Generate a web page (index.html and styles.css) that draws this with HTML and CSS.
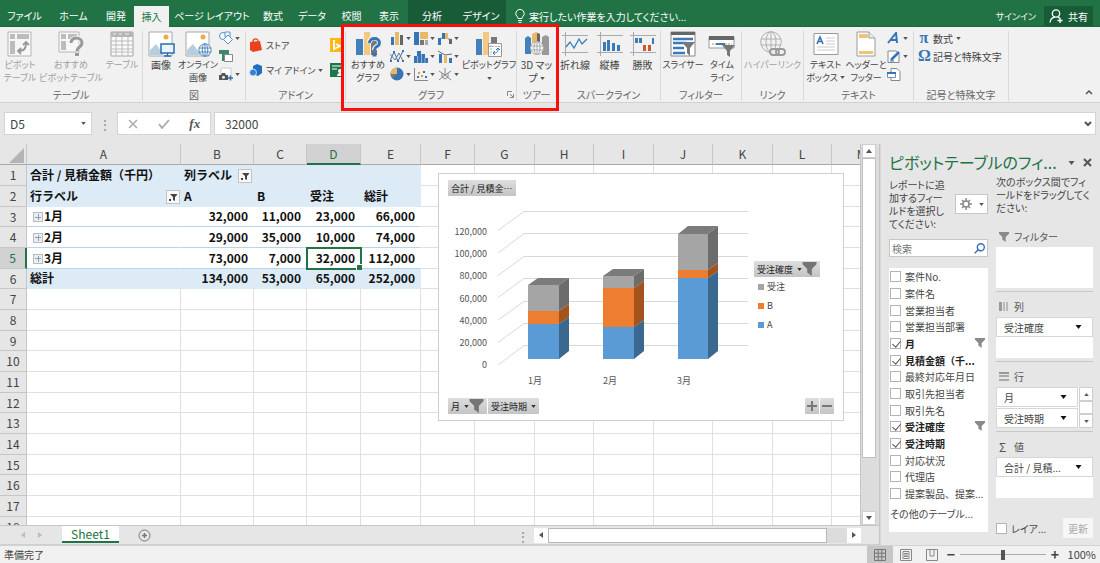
FILE: index.html
```html
<!DOCTYPE html>
<html lang="ja">
<head>
<meta charset="utf-8">
<title>Excel - ピボットグラフ</title>
<link rel="stylesheet" href="styles.css">
</head>
<body>
<svg class="defs" aria-hidden="true">
  <symbol id="caret" viewBox="0 0 6 4"><path d="M0 0h6L3 4z" fill="currentColor"/></symbol>
  <symbol id="funnel" viewBox="0 0 12 12"><path d="M0 0h12v2L8 6v6L4 9V6L0 2z" fill="currentColor"/></symbol>
</svg>

<header class="titlebar">
  <nav class="tabs">
    <button class="tab">ファイル</button><button class="tab">ホーム</button><button class="tab">開発</button><button class="tab tab-active">挿入</button><button class="tab">ページ レイアウト</button><button class="tab">数式</button><button class="tab">データ</button><button class="tab">校閲</button><button class="tab">表示</button><button class="tab tab-context">分析</button><button class="tab tab-context">デザイン</button>
  </nav>
  <button class="tell-me">
    <svg width="10" height="14" viewBox="0 0 10 14" fill="none" stroke="#fff"><path d="M3 9.500C3 7.500.8 7 .8 4.600a4.200 4.200 0 0 1 8.400 0C9.200 7 7 7.500 7 9.500zM3 11.500h4M3.500 13.300h3"/></svg>
    <span>実行したい作業を入力してください...</span>
  </button>
  <button class="signin">サインイン</button>
  <button class="share">
    <svg width="15" height="14" viewBox="0 0 15 14" fill="none" stroke="#fff" stroke-width="1.300"><circle cx="7" cy="4.500" r="3.700"/><path d="M1 13.500C1.500 10 3.500 8.500 6 8.200M9 8.200l2 1M11 9v5M8.500 11.500h5"/></svg>
    <span>共有</span>
  </button>
</header>

<section class="ribbon">
  <div class="group">
    <div class="tools tools-table">
      <button class="big off kana"><svg width="26" height="26" viewBox="0 0 26 26"><path d="M1 1h23v24H1z" fill="#f7f7f7" stroke="#b5b5b5"/><path d="M3 3h5v5H3zM10 3h12v5H10zM3 10h5v13H3z" fill="#bcbcbc"/><path d="M11 20c6 0 8-2 8-8M16 14l3-3 3 3M14 17l-3 3 3 3" fill="none" stroke="#999" stroke-width="1.800"/></svg><span>ピボット<br>テーブル</span></button>
      <button class="big off kana"><svg width="26" height="26" viewBox="0 0 26 26"><path d="M1 1h20v20H1z" fill="#f7f7f7" stroke="#b5b5b5"/><path d="M3 3h5v5H3zM10 3h9v5h-9zM3 10h5v9H3z" fill="#bcbcbc"/><path d="M13 12c0-7 11-6 11 0 0 4-5 4-5 8" fill="none" stroke="#f1f1f1" stroke-width="5"/><path d="M13 12c0-7 11-6 11 0 0 4-5 4-5 8" fill="none" stroke="#999" stroke-width="3"/><path d="M17 22h4v3h-4z" fill="#999"/></svg><span>おすすめ<br>ピボットテーブル</span></button>
      <button class="big off kana"><svg width="24" height="26" viewBox="0 0 24 26"><path d="M1 1h22v24H1z" fill="#fafafa" stroke="#a5a5a5"/><path d="M1 1h22v5H1z" fill="#b5b5b5"/><path d="M1 10h22M1 14h22M1 18h22M1 21h22M6 6v19M12 6v19M18 6v19" stroke="#bcbcbc"/><path d="M3 3h3M9 3h3M15 3h4" stroke="#eee"/></svg><span>テーブル</span></button>
    </div>
    <h2>テーブル</h2>
  </div>

  <div class="group">
    <div class="tools tools-figure">
      <button class="big"><svg width="28" height="26" viewBox="0 0 28 26"><path d="M2 1h23v24H2z" fill="#fff" stroke="#a8a8a8"/><circle cx="19" cy="6" r="2.500" fill="#f0a848"/><path d="M3 24V19l6-6 8 11z" fill="#b7cee0"/><path d="M14 13h13v9H14z" fill="#eaf4fc" stroke="#2b6cb0" stroke-width="1.500"/><path d="M17 25h7M20.500 22v3" stroke="#2b6cb0" stroke-width="1.500"/></svg><span>画像</span></button>
      <button class="big kana"><svg width="28" height="26" viewBox="0 0 28 26"><path d="M2 1h23v24H2z" fill="#fff" stroke="#a8a8a8"/><circle cx="19" cy="6" r="2.500" fill="#f0a848"/><path d="M3 24V19l6-6 8 11z" fill="#b7cee0"/><g fill="#fff" stroke="#4f86bd"><circle cx="21" cy="19" r="6.200"/><ellipse cx="21" cy="19" rx="2.800" ry="6.200"/><path d="M15 17h12M15 21h12M21 13v12" fill="none"/></g></svg><span>オンライン<br>画像</span></button>
      <div class="smalls">
        <button class="small"><svg width="14" height="14" viewBox="0 0 14 14" fill="#f4f9fd" stroke="#5b93c8"><circle cx="4" cy="5" r="3.500"/><path d="M6 1h5v5H6z"/><path d="M9 4l4.500 4.500L9 13 4.500 8.500z"/></svg><svg class="caret"><use href="#caret"/></svg></button>
        <button class="small"><svg width="14" height="12" viewBox="0 0 14 12"><path d="M0 0h10v4h3v3H6v4H3V4H0z" fill="#3d8768"/><path d="M5.500 4.500h8v7h-8z" fill="#fff" stroke="#888"/></svg></button>
        <button class="small"><svg width="14" height="14" viewBox="0 0 14 14"><path d="M2 1h10v9H2z" fill="#fff" stroke="#ccc"/><path d="M0 8h2l1-2h3l1 2h2v5H0z" fill="#555"/><circle cx="4.500" cy="10.300" r="1.500" fill="#eee"/><path d="M9 11h5M11.500 8.500v5" stroke="#2e75b6" stroke-width="1.500"/></svg><svg class="caret"><use href="#caret"/></svg></button>
      </div>
    </div>
    <h2>図</h2>
  </div>

  <div class="group">
    <div class="tools tools-addin">
      <button class="line kana"><svg width="14" height="14" viewBox="0 0 14 14"><path d="M1 4l10-1 2 9-9 2-3-2z" fill="#e8431c"/><path d="M4 4c0-4 5-4 5-1" fill="none" stroke="#e8431c" stroke-width="1.300"/></svg><span>ストア</span></button>
      <button class="small" aria-label="Bing Maps"><svg width="14" height="14" viewBox="0 0 14 14"><path d="M0 0h14v14H0z" fill="#fcb714"/><path d="M4 2v9l6-3-4-2" fill="none" stroke="#fff" stroke-width="1.800"/></svg></button>
      <button class="line kana"><svg width="14" height="14" viewBox="0 0 14 14"><path d="M4 3l4-2 5 2v7l-4 3-5-2z" fill="#1f6fc0"/><circle cx="4" cy="9.500" r="3.500" fill="#2f86d8" stroke="#f1f1f1" stroke-width=".8"/></svg><span>マイ アドイン</span><svg class="caret"><use href="#caret"/></svg></button>
      <button class="small" aria-label="People Graph"><svg width="14" height="14" viewBox="0 0 14 14"><path d="M0 0h14v14H0z" fill="#1c7a4a"/><path d="M2 3h10M2 6h5" stroke="#fff"/><circle cx="10" cy="8" r="2" fill="#fff"/><path d="M7 13c0-4 6-4 6 0z" fill="#fff"/></svg></button>
    </div>
    <h2>アドイン</h2>
  </div>

  <div class="group">
    <div class="tools tools-graph">
      <button class="big kana"><svg width="28" height="26" viewBox="0 0 28 26"><path d="M2 8h7v16H2z" fill="#4180bb"/><path d="M10 1h6v23h-6z" fill="#f3c982"/><path d="M17 5h6v19h-6z" fill="#777"/><path d="M15.500 12c0-7 10-6 10 0 0 4-5 3-5 7" fill="none" stroke="#f1f1f1" stroke-width="5"/><path d="M15.500 12c0-6 10-6 10 0 0 4-5 3-5 7" fill="none" stroke="#3574b5" stroke-width="3"/><path d="M18.500 21.500h4v4h-4z" fill="#3574b5"/></svg><span>おすすめ<br>グラフ</span></button>
      <div class="chart-types">
        <button class="small"><svg width="14" height="13" viewBox="0 0 14 13"><path d="M1 5h3v8H1z" fill="#3574b5"/><path d="M5 0h4v13H5z" fill="#eab967"/><path d="M10 3h3v10h-3z" fill="#666"/></svg><svg class="caret"><use href="#caret"/></svg></button>
        <button class="small"><svg width="14" height="13" viewBox="0 0 14 13"><path d="M0 0h5v13H0z" fill="#3574b5"/><path d="M6 0h8v7H6z" fill="#eab967"/><path d="M6 8h4v5H6z" fill="#777"/><path d="M11 8h3v5h-3z" fill="#aaa"/></svg><svg class="caret"><use href="#caret"/></svg></button>
        <button class="small"><svg width="14" height="13" viewBox="0 0 14 13"><path d="M0 6h3v7H0zM4 1h3v6H4z" fill="#3574b5"/><path d="M7 1h3v6H7z" fill="#eab967"/><path d="M11 7h3v5h-3z" fill="#666"/><path d="M3 6h3M10 7h2" stroke="#777"/></svg><svg class="caret"><use href="#caret"/></svg></button>
        <button class="small"><svg width="14" height="13" viewBox="0 0 14 13" fill="none"><path d="M0 11L4 2l4 9 5-10" stroke="#3574b5"/><path d="M0 4l5 6 4-7 4 8" stroke="#777"/><path d="M0 10h2v2H0zM3 1h2v2H3zM7 10h2v2H7zM12 0h2v2h-2zM12 10h2v2h-2z" fill="#3574b5"/></svg><svg class="caret"><use href="#caret"/></svg></button>
        <button class="small"><svg width="14" height="13" viewBox="0 0 14 13" fill="#3574b5"><path d="M0 6h4v7H0zM3 1h4v12H3zM7 4h4v9H7zM11 8h3v5h-3z"/><path d="M3.500 6v7M7.500 4v9M11 8v5" stroke="#f1f1f1" stroke-width=".5"/></svg><svg class="caret"><use href="#caret"/></svg></button>
        <button class="small"><svg width="14" height="13" viewBox="0 0 14 13"><path d="M1 4h3v9H1z" fill="#3574b5"/><path d="M6 6h3v7H6z" fill="#eab967"/><path d="M11 8h3v5h-3z" fill="#3574b5"/><path d="M0 1l7 4 7-1" fill="none" stroke="#666"/></svg><svg class="caret"><use href="#caret"/></svg></button>
        <button class="small"><svg width="14" height="14" viewBox="0 0 14 14"><circle cx="7" cy="7" r="6.500" fill="#3574b5"/><path d="M7 7V.500A6.500 6.500 0 0 0 .5 7z" fill="#eab967"/><path d="M7 7H.5a6.500 6.500 0 0 0 2 4.600z" fill="#777"/></svg><svg class="caret"><use href="#caret"/></svg></button>
        <button class="small"><svg width="14" height="13" viewBox="0 0 14 13"><path d="M.5 0v12.500H14" fill="none" stroke="#888"/><path d="M3 8h2v2H3zM9 3h2v2H9zM11 8h2v2h-2z" fill="#3574b5"/><path d="M4 4h2v2H4zM7 7h2v2H7z" fill="#e29b3e"/></svg><svg class="caret"><use href="#caret"/></svg></button>
        <button class="small"><svg width="14" height="13" viewBox="0 0 14 13" fill="none" stroke="#888"><path d="M7 0v7l6 5M7 7l-6 5M1 3l6 4 6-4M4 5v4l3 2 3-2V5"/></svg><svg class="caret"><use href="#caret"/></svg></button>
      </div>
      <button class="big kana"><svg width="28" height="26" viewBox="0 0 28 26"><path d="M1 8h6v16H1z" fill="#4180bb"/><path d="M8 1h6v23H8z" fill="#f3c982"/><path d="M16 6h6v8h-6z" fill="#777"/><path d="M13.500 12.500h13v13h-13z" fill="#fff" stroke="#999"/><path d="M16 14v10M14 15.500h11" stroke="#aaa" stroke-dasharray="2 1"/><path d="M18 22c4 0 5-1 5-4M21 19l2-2 2 2M20 20l-2 2 2 2" fill="none" stroke="#3574b5"/></svg><span>ピボットグラフ</span><svg class="caret"><use href="#caret"/></svg></button>
    </div>
    <h2>グラフ<svg class="launcher" width="7" height="7" viewBox="0 0 7 7"><path d="M.5 5V.500H5M3 3l3 3M6.500 3v3.500H3" fill="none" stroke="#888"/></svg></h2>
  </div>

  <div class="group">
    <div class="tools">
      <button class="big"><svg width="26" height="26" viewBox="0 0 26 26"><path d="M1 7l3-2 3 2v16H1z" fill="#4180bb"/><path d="M8 3l4-2 4 2v11H8z" fill="#eab967"/><path d="M13 2l3 1v9h-3z" fill="#666"/><path d="M18 6l4-2 3 2v18h-7z" fill="#999"/><g fill="#f8f8f8" stroke="#aaa"><circle cx="13" cy="17" r="6.500"/><ellipse cx="13" cy="17" rx="3" ry="6.500"/><path d="M7 15h12M7 19h12M13 11v12" fill="none"/></g></svg><span>3D マッ<br>プ <svg class="caret"><use href="#caret"/></svg></span></button>
    </div>
    <h2>ツアー</h2>
  </div>

  <div class="group">
    <div class="tools tools-spark">
      <button class="big"><svg width="26" height="24" viewBox="0 0 26 24" fill="none"><path d="M3.500 0v24M0 3.500h26M0 20.500h26" stroke="#aaa"/><path d="M4 15l4-5 4 6 5-9 3 5 5-5" stroke="#3b7ab8" stroke-width="1.300"/></svg><span>折れ線</span></button>
      <button class="big"><svg width="26" height="24" viewBox="0 0 26 24"><path d="M3.500 0v24M0 3.500h26M0 20.500h26" stroke="#aaa"/><path d="M6 10h3v9H6zM10 8h3v11h-3zM15 11h3v8h-3zM20 13h3v6h-3z" fill="#3b7ab8"/></svg><span>縦棒</span></button>
      <button class="big"><svg width="26" height="24" viewBox="0 0 26 24"><path d="M3.500 0v24M0 3.500h26M0 20.500h26" stroke="#aaa"/><path d="M5 6h3v5H5zM9 6h3v5H9zM22 6h2v6h-2z" fill="#3b7ab8"/><path d="M13 13h3v6h-3zM18 13h3v6h-3z" fill="#d0562c"/></svg><span>勝敗</span></button>
    </div>
    <h2>スパークライン</h2>
  </div>

  <div class="group">
    <div class="tools tools-filter">
      <button class="big kana"><svg width="26" height="26" viewBox="0 0 26 26"><path d="M1 1h24v24H1z" fill="#fff" stroke="#888"/><path d="M1 1h24v3H1z" fill="#666"/><path d="M3 8h20M3 12h13M3 17h11M3 22h12" stroke="#3b7ab8" stroke-width="2.500"/><path d="M12 11h13l-5 6v8l-3-3v-5z" fill="#777"/></svg><span>スライサー</span></button>
      <button class="big kana"><svg width="28" height="26" viewBox="0 0 28 26"><path d="M1 6h25v11H1z" fill="#fff" stroke="#999"/><path d="M1 5h25v4H1z" fill="#666"/><path d="M4 13h4M17 13h7" stroke="#999" stroke-dasharray="2 1"/><path d="M8 13h9" stroke="#3b7ab8" stroke-width="2"/><path d="M14 14h13l-5 6v6l-3-2v-4z" fill="#777"/></svg><span>タイム<br>ライン</span></button>
    </div>
    <h2>フィルター</h2>
  </div>

  <div class="group">
    <div class="tools">
      <button class="big off kana"><svg width="28" height="26" viewBox="0 0 28 26" fill="none" stroke="#b0b0b0"><circle cx="12" cy="11" r="10.300"/><ellipse cx="12" cy="11" rx="5" ry="10.300"/><path d="M2 8h20M2 14h20M12 1v20"/><g stroke="#f1f1f1" stroke-width="5"><path d="M12 19h4M20 21h4"/></g><rect x="11" y="18" width="9" height="6" rx="3" stroke="#999" stroke-width="1.800"/><rect x="17" y="18" width="9" height="6" rx="3" stroke="#999" stroke-width="1.800"/></svg><span>ハイパーリンク</span></button>
    </div>
    <h2>リンク</h2>
  </div>

  <div class="group">
    <div class="tools tools-text">
      <button class="big kana"><svg width="26" height="24" viewBox="0 0 26 24"><path d="M1 1.500h24v21H1z" fill="#fff" stroke="#999"/><path d="M4 12L7 5l3 7M5 9.500h4" fill="none" stroke="#3574b5" stroke-width="1.600"/><path d="M13 6h9M13 9h9M13 12h9M4 15h18M4 18h18" stroke="#ccc"/></svg><span>テキスト<br>ボックス <svg class="caret"><use href="#caret"/></svg></span></button>
      <button class="big kana"><svg width="20" height="26" viewBox="0 0 20 26"><path d="M1 1h12l6 6v18H1z" fill="#fff" stroke="#999"/><path d="M13 1v6h6" fill="#eee" stroke="#999"/><path d="M3 3h9v4H3zM3 20h14v3H3z" fill="#eec37a"/></svg><span>ヘッダーと<br>フッター</span></button>
      <div class="smalls">
        <button class="small"><svg width="14" height="12" viewBox="0 0 14 12" fill="none" stroke="#3574b5" stroke-width="2"><path d="M1 11L9 1l1 10M4 8h6"/></svg><svg class="caret"><use href="#caret"/></svg></button>
        <button class="small"><svg width="14" height="13" viewBox="0 0 14 13"><path d="M1 1h8l3 3v8.500H1z" fill="#fff" stroke="#888"/><path d="M4 10l8-8" stroke="#3574b5" stroke-width="2.500"/><path d="M3 11h4" stroke="#3574b5"/></svg><svg class="caret"><use href="#caret"/></svg></button>
        <button class="small"><svg width="14" height="13" viewBox="0 0 14 13"><path d="M4 .5h6l3 3v9H4z" fill="#fff" stroke="#888"/><path d="M.5 4.500h8v5h-8z" fill="#fff" stroke="#7a8ea5"/><path d="M0 5h9" stroke="#3574b5" stroke-width="2"/></svg></button>
      </div>
    </div>
    <h2>テキスト</h2>
  </div>

  <div class="group">
    <div class="tools tools-symbol">
      <button class="line"><b class="greek">π</b><span>数式</span><svg class="caret"><use href="#caret"/></svg></button>
      <button class="line"><b class="greek">Ω</b><span>記号と特殊文字</span></button>
    </div>
    <h2>記号と特殊文字</h2>
  </div>
  <button class="collapse" aria-label="リボンを折りたたむ"><svg width="8" height="5" viewBox="0 0 8 5"><path d="M1 4l3-3 3 3" fill="none" stroke="#555" stroke-width="1.500"/></svg></button>
  <div class="highlight"></div>
</section>

<section class="formula-bar">
  <label class="name-box"><input type="text" value="D5" aria-label="名前ボックス"><svg class="caret"><use href="#caret"/></svg></label>
  <span class="dots">⋮</span>
  <div class="formula-buttons">
    <button aria-label="キャンセル"><svg width="10" height="10" viewBox="0 0 10 10"><path d="M1 1l8 8M9 1L1 9" stroke="#aaa" stroke-width="1.500"/></svg></button>
    <button aria-label="入力"><svg width="12" height="10" viewBox="0 0 12 10"><path d="M1 5l3 4 7-8" fill="none" stroke="#aaa" stroke-width="1.800"/></svg></button>
    <button class="fx">fx</button>
  </div>
  <label class="formula"><input type="text" value="32000" aria-label="数式"><svg width="8" height="6" viewBox="0 0 8 6"><path d="M1 1l3 3 3-3" fill="none" stroke="#555" stroke-width="2"/></svg></label>
</section>

<main class="workspace">
  <div class="book">
    <div class="sheet-row">
      <div class="sheet">
        <table class="cells">
          <colgroup><col class="c-head"><col class="c-a"><col class="c-b"><col class="c-c"><col class="c-d"><col class="c-e"><col class="c-d"><col class="c-e"><col class="c-std"><col class="c-e"><col class="c-std"><col class="c-e"><col class="c-std"><col></colgroup>
          <thead><tr><th class="corner"><svg width="15" height="15" viewBox="0 0 15 15"><path d="M15 0v15H0z" fill="#b4b4b4"/></svg></th><th>A</th><th>B</th><th>C</th><th class="col-on">D</th><th>E</th><th>F</th><th>G</th><th>H</th><th>I</th><th>J</th><th>K</th><th>L</th><th>M</th></tr></thead>
          <tbody>
            <tr class="band"><th>1</th><td>合計 / 見積金額（千円）</td><td><div class="with-filter">列ラベル<button class="filter" aria-label="列フィルター"><svg width="8" height="8" viewBox="0 0 8 8"><path d="M1 1h7v1L6 4v4L4 7V4zM0 6h2v2H0z" fill="currentColor"/></svg></button></div></td><td></td><td></td><td></td><td><td><td><td><td><td><td><td></tr>
            <tr class="band"><th>2</th><td class="edge"><div class="with-filter">行ラベル<button class="filter" aria-label="行フィルター"><svg width="8" height="8" viewBox="0 0 8 8"><path d="M1 1h7v1L6 4v4L4 7V4zM0 6h2v2H0z" fill="currentColor"/></svg></button></div></td><td>A</td><td>B</td><td>受注</td><td>総計</td><td><td><td><td><td><td><td><td></tr>
            <tr class="item"><th>3</th><td><button class="plus" aria-label="展開"></button>1月</td><td class="num">32,000</td><td class="num">11,000</td><td class="num">23,000</td><td class="num">66,000</td><td><td><td><td><td><td><td><td></tr>
            <tr class="item"><th>4</th><td><button class="plus" aria-label="展開"></button>2月</td><td class="num">29,000</td><td class="num">35,000</td><td class="num">10,000</td><td class="num">74,000</td><td><td><td><td><td><td><td><td></tr>
            <tr class="item"><th class="row-on">5</th><td><button class="plus" aria-label="展開"></button>3月</td><td class="num">73,000</td><td class="num">7,000</td><td class="num selected">32,000</td><td class="num">112,000</td><td><td><td><td><td><td><td><td></tr>
            <tr class="band"><th>6</th><td>総計</td><td class="num">134,000</td><td class="num">53,000</td><td class="num">65,000</td><td class="num">252,000</td><td><td><td><td><td><td><td><td></tr>
            <tr><th>7</th><td><td><td><td><td><td><td><td><td><td><td><td><td></tr>
            <tr><th>8</th><td><td><td><td><td><td><td><td><td><td><td><td><td></tr>
            <tr><th>9</th><td><td><td><td><td><td><td><td><td><td><td><td><td></tr>
            <tr><th>10</th><td><td><td><td><td><td><td><td><td><td><td><td><td></tr>
            <tr><th>11</th><td><td><td><td><td><td><td><td><td><td><td><td><td></tr>
            <tr><th>12</th><td><td><td><td><td><td><td><td><td><td><td><td><td></tr>
            <tr><th>13</th><td><td><td><td><td><td><td><td><td><td><td><td><td></tr>
            <tr><th>14</th><td><td><td><td><td><td><td><td><td><td><td><td><td></tr>
            <tr><th>15</th><td><td><td><td><td><td><td><td><td><td><td><td><td></tr>
            <tr><th>16</th><td><td><td><td><td><td><td><td><td><td><td><td><td></tr>
            <tr><th>17</th><td><td><td><td><td><td><td><td><td><td><td><td><td></tr>
            <tr><th>18</th><td><td><td><td><td><td><td><td><td><td><td><td><td></tr>
          </tbody>
        </table>

        <figure class="chart">
          <div class="chart-row"><button class="field">合計 / 見積金…</button></div>
          <div class="chart-row chart-main">
            <svg width="306" height="198" viewBox="448 198 306 198">
              <g fill="none" stroke="#d9d9d9"><path d="M498 230.500L524 211.500H748M498 253L524 233.500H748M498 275.500L524 256.500H748M498 297.500L524 278.500H748M498 320L524 301.500H748M498 342.500L524 323.500H748M498 365L524 345.500H748"/></g>
              <g class="axis" text-anchor="end"><text x="487" y="235">120,000</text><text x="487" y="257">100,000</text><text x="487" y="279">80,000</text><text x="487" y="302">60,000</text><text x="487" y="324">40,000</text><text x="487" y="346">20,000</text><text x="487" y="368">0</text></g>
              <g class="axis" text-anchor="middle"><text x="535" y="384">1月</text><text x="610" y="384">2月</text><text x="684" y="384">3月</text></g>
              <path d="M528 285l10-7h31l-10 7z" fill="#7b7b7b"/><path d="M528 285h31v26h-31z" fill="#a5a5a5"/><path d="M559 285l10-7v26l-10 7z" fill="#6c6c6c"/>
              <path d="M528 311h31v13h-31z" fill="#ed7d31"/><path d="M559 311l10-7v13l-10 7z" fill="#a3531b"/><path d="M528 324h31v35h-31z" fill="#5b9bd5"/><path d="M559 324l10-7v34l-10 8z" fill="#3b688f"/>
              <path d="M603 276l10-7h31l-10 7z" fill="#7b7b7b"/><path d="M603 276h31v12h-31z" fill="#a5a5a5"/><path d="M634 276l10-7v12l-10 7z" fill="#6c6c6c"/>
              <path d="M603 288h31v39h-31z" fill="#ed7d31"/><path d="M634 288l10-7v39l-10 7z" fill="#a3531b"/><path d="M603 327h31v32h-31z" fill="#5b9bd5"/><path d="M634 327l10-7v31l-10 8z" fill="#3b688f"/>
              <path d="M678 234l10-8h30l-10 8z" fill="#7b7b7b"/><path d="M678 234h30v36h-30z" fill="#a5a5a5"/><path d="M708 234l10-8v37l-10 7z" fill="#6c6c6c"/>
              <path d="M678 270h30v8h-30z" fill="#ed7d31"/><path d="M708 270l10-7v8l-10 7z" fill="#a3531b"/><path d="M678 278h30v81h-30z" fill="#5b9bd5"/><path d="M708 278l10-7v80l-10 8z" fill="#3b688f"/>
            </svg>
            <div class="legend">
              <button class="field"><span>受注確度</span><svg class="caret"><use href="#caret"/></svg><svg class="big-funnel"><use href="#funnel"/></svg></button>
              <ul><li><i class="key key-won"></i>受注</li><li><i class="key key-b"></i>B</li><li><i class="key key-a"></i>A</li></ul>
            </div>
          </div>
          <div class="chart-row">
            <button class="field"><span>月</span><svg class="caret"><use href="#caret"/></svg><svg class="big-funnel"><use href="#funnel"/></svg></button>
            <button class="field"><span>受注時期</span><svg class="caret"><use href="#caret"/></svg></button>
            <span class="spacer"></span>
            <button class="field sign" aria-label="展開"><svg width="10" height="10"><path d="M0 5h10M5 0v10" stroke="#777" stroke-width="2"/></svg></button>
            <button class="field sign" aria-label="折りたたみ"><svg width="10" height="10"><path d="M0 5h10" stroke="#777" stroke-width="2"/></svg></button>
          </div>
        </figure>
      </div>
      <div class="vscroll"><button aria-label="上へ"><svg class="caret flip"><use href="#caret"/></svg></button><div class="v-thumb"></div><div class="v-track"></div><button aria-label="下へ"><svg class="caret"><use href="#caret"/></svg></button></div>
    </div>
    <div class="sheet-bar">
      <span class="tab-nav"><svg width="4" height="6" viewBox="0 0 4 6"><path d="M4 0v6L0 3z" fill="#bbb"/></svg><svg width="4" height="6" viewBox="0 0 4 6"><path d="M0 0v6l4-3z" fill="#bbb"/></svg></span>
      <button class="sheet-tab">Sheet1</button>
      <button class="add-sheet" aria-label="新しいシート"><svg width="13" height="13" viewBox="0 0 13 13" fill="none" stroke="#777"><circle cx="6.500" cy="6.500" r="5.500"/><path d="M4 6.500h5M6.500 4v5" stroke-width="1.500"/></svg></button>
      <span class="dots">⋮</span>
      <div class="hscroll"><button aria-label="左へ"><svg width="4" height="6" viewBox="0 0 4 6"><path d="M4 0v6L0 3z" fill="#555"/></svg></button><div class="h-thumb"></div><div class="h-track"></div><button aria-label="右へ"><svg width="4" height="6" viewBox="0 0 4 6"><path d="M0 0v6l4-3z" fill="#555"/></svg></button></div>
    </div>
  </div>

  <aside class="pane">
    <div class="pane-title"><h1>ピボットテーブルのフィ...</h1><svg class="caret"><use href="#caret"/></svg><button aria-label="閉じる"><svg width="9" height="9" viewBox="0 0 9 9"><path d="M1 1l7 7M8 1L1 8" stroke="#555" stroke-width="2"/></svg></button></div>
    <div class="pane-cols">
      <div class="fields-col">
        <div class="intro"><p>レポートに追加するフィールドを選択してください:</p><button class="gear" aria-label="ツール"><svg width="12" height="12" viewBox="0 0 12 12" fill="none" stroke="#888"><circle cx="6" cy="6" r="3" stroke-width="1.500"/><path d="M6 0v3M6 9v3M0 6h3M9 6h3M2 2l2 2M8 8l2 2M10 2L8 4M4 8l-2 2" stroke-width="1.500"/></svg><svg class="caret"><use href="#caret"/></svg></button></div>
        <label class="search"><input type="text" placeholder="検索" aria-label="検索"><svg width="11" height="11" viewBox="0 0 11 11" fill="none" stroke="#2f6fc0" stroke-width="1.400"><circle cx="6.800" cy="4.200" r="3.500"/><path d="M4.300 6.700L.7 10.300"/></svg></label>
        <div class="field-list">
          <ul>
            <li><label><input type="checkbox"><span>案件No.</span></label></li>
            <li><label><input type="checkbox"><span>案件名</span></label></li>
            <li><label><input type="checkbox"><span>営業担当者</span></label></li>
            <li><label><input type="checkbox"><span>営業担当部署</span></label></li>
            <li><label><input type="checkbox" checked><span>月</span><svg class="flag"><use href="#funnel"/></svg></label></li>
            <li><label><input type="checkbox" checked><span>見積金額（千...</span></label></li>
            <li><label><input type="checkbox"><span>最終対応年月日</span></label></li>
            <li><label><input type="checkbox"><span>取引先担当者</span></label></li>
            <li><label><input type="checkbox"><span>取引先名</span></label></li>
            <li><label><input type="checkbox" checked><span>受注確度</span><svg class="flag"><use href="#funnel"/></svg></label></li>
            <li><label><input type="checkbox" checked><span>受注時期</span></label></li>
            <li><label><input type="checkbox"><span>対応状況</span></label></li>
            <li><label><input type="checkbox"><span>代理店</span></label></li>
            <li><label><input type="checkbox"><span>提案製品、提案...</span></label></li>
          </ul>
          <a href="#">その他のテーブル...</a>
        </div>
      </div>
      <div class="areas-col">
        <p>次のボックス間でフィールドをドラッグしてください:</p>
        <section class="area"><h3><svg width="10" height="10"><use href="#funnel"/></svg>フィルター</h3><div class="drop"></div></section>
        <section class="area"><h3><svg width="10" height="9" viewBox="0 0 10 9"><path d="M0 0h3v9H0z" fill="#999"/><path d="M4 0h2v9H4zM7 0h2v9H7z" fill="#bbb"/></svg>列</h3><div class="drop"><button class="pill">受注確度<svg class="caret"><use href="#caret"/></svg></button></div></section>
        <section class="area"><h3><svg width="10" height="9" viewBox="0 0 10 9"><path d="M0 0h10v2H0z" fill="#999"/><path d="M0 3h10v2H0zM0 7h10v2H0z" fill="#aaa"/></svg>行</h3><div class="drop drop-split"><div class="pills"><button class="pill">月<svg class="caret"><use href="#caret"/></svg></button><button class="pill">受注時期<svg class="caret"><use href="#caret"/></svg></button></div><div class="mini-scroll"><button aria-label="上へ"><svg class="caret flip"><use href="#caret"/></svg></button><i></i><button aria-label="下へ"><svg class="caret"><use href="#caret"/></svg></button></div></div></section>
        <section class="area area-last"><h3><span class="sigma">Σ</span>値</h3><div class="drop"><button class="pill">合計 / 見積...<svg class="caret"><use href="#caret"/></svg></button></div></section>
        <div class="defer"><label><input type="checkbox"><span>レイア...</span></label><button class="update" disabled>更新</button></div>
      </div>
    </div>
  </aside>
</main>

<footer class="status">
  <span>準備完了</span>
  <span class="spacer"></span>
  <button class="view view-on" aria-label="標準"><svg width="12" height="12" viewBox="0 0 12 12" fill="none" stroke="#777"><path d="M.5.500h11v11H.5zM.5 4.200h11M.5 7.800h11M4.200.5v11M7.800.5v11"/></svg></button>
  <button class="view" aria-label="ページ レイアウト"><svg width="12" height="12" viewBox="0 0 12 12" fill="none" stroke="#888"><path d="M.5.500h11v11H.5zM3 2.500h6v7H3zM4 4.500h4M4 6h4M4 7.500h4"/></svg></button>
  <button class="view" aria-label="改ページ"><svg width="12" height="12" viewBox="0 0 12 12" fill="none" stroke="#888"><path d="M.5.500h11v11H.5zM4 0v7h4V0"/></svg></button>
  <span class="zoom-sign">−</span>
  <input class="zoom" type="range" min="10" max="190" value="100" aria-label="ズーム">
  <span class="zoom-sign">+</span>
  <span class="zoom-value">100%</span>
</footer>
</body>
</html>
```
FILE: styles.css
```css
* { box-sizing: border-box; }

body {
  margin: 0;
  height: 100vh;
  display: flex;
  flex-direction: column;
  overflow: hidden;
  background: #e6e6e6;
  color: #444;
  font: 10px/13px "Noto Sans CJK JP", sans-serif;
  font-feature-settings: "palt";
}

button, input { font: inherit; font-feature-settings: inherit; color: inherit; }
button { padding: 0; border: 0; background: none; white-space: nowrap; }
input { min-width: 0; border: 0; background: none; padding: 0; }
h1, h2, h3, p, ul, figure { margin: 0; padding: 0; font-weight: 400; }
ul { list-style: none; }
svg { flex: none; }
.defs { position: absolute; width: 0; height: 0; }
.caret { width: 5px; height: 3px; color: #555; }
.flip { transform: rotate(180deg); }
.spacer { flex: 1; }

/* title bar */
.titlebar {
  flex: none;
  display: flex;
  height: 27px;
  padding: 6px 7px 0 0;
  background: #217346;
  color: #fff;
  border-bottom: 1px solid #1c643c;
}
.tabs { display: grid; grid-template-columns: 49px 49px 36px 35px 86px 36px 42px 37px 38px 48px 50px; }
.tab { height: 20px; line-height: 20px; }
.tab-active { background: #f1f1f1; color: #217346; height: 21px; }
.tab-context { background: #185c37; margin-top: -6px; height: 26px; padding-top: 6px; }
.tell-me { display: flex; align-items: center; gap: 4px; margin: 0 auto 0 9px; }
.signin { margin-right: 8px; font-size: 9px; }
.share { display: flex; align-items: center; justify-content: center; gap: 4px; width: 49px; background: #185c37; }

/* ribbon */
.ribbon {
  position: relative;
  flex: none;
  display: grid;
  grid-template-columns: 143px 103px 100px 171px 40px 104px 81px 62px 110px 95px 1fr;
  height: 76px;
  padding: 4px 0 1px;
  background: #f1f1f1;
  border-bottom: 1px solid #d2d2d2;
}
.group { display: flex; flex-direction: column; justify-content: space-between; border-right: 1px solid #dadada; }
.group h2 { position: relative; text-align: center; font-size: 10px; line-height: 13px; color: #666; }
.launcher { position: absolute; right: 2px; top: 3px; }
.tools { display: grid; align-items: start; }
.tools-table { grid-template-columns: 40px 62px 40px; }
.tools-figure { grid-template-columns: 36px 38px 26px; }
.tools-addin { grid-template-columns: 81px 15px; row-gap: 11px; padding: 7px 0 0 3px; }
.tools-graph { grid-template-columns: 44px 72px 54px; }
.tools-spark { grid-template-columns: 36px 33px 33px; }
.tools-filter { grid-template-columns: 44px 34px; }
.tools-text { grid-template-columns: 43px 38px 26px; }
.tools-symbol { row-gap: 4px; padding-left: 4px; }
.big { display: flex; flex-direction: column; align-items: center; gap: 1px; }
.big > svg:first-child { height: 26px; }
.big > span { line-height: 13px; text-align: center; }
.big span .caret { margin: 0 0 2px; }
.big > .caret { margin-top: 5px; }
.kana { font-size: 9px; }
.off { color: #a0a0a0; }
.smalls { display: grid; row-gap: 4px; padding-left: 2px; }
.chart-types { display: grid; grid-template-columns: repeat(3, 1fr); row-gap: 4px; }
.small { display: flex; align-items: center; gap: 2px; height: 14px; }
.line { display: flex; align-items: center; gap: 3px; height: 14px; }
.greek { width: 12px; font: 700 16px/14px "Liberation Serif", serif; color: #3574b5; }
.collapse { align-self: end; justify-self: end; margin: 0 7px 4px 0; }
.highlight { position: absolute; left: 341px; top: -3px; width: 218px; height: 87px; border: 3px solid #fb0f0c; pointer-events: none; z-index: 2; }

/* formula bar */
.formula-bar { flex: none; display: flex; align-items: stretch; height: 41px; padding: 9px 4px; font-size: 12px; }
.formula-bar label, .formula-buttons { display: flex; align-items: center; background: #fff; border: 1px solid #d4d4d4; }
.name-box { width: 88px; padding: 0 5px; justify-content: space-between; }
.name-box input { width: 60px; }
.dots { width: 25px; text-align: center; align-self: center; color: #888; font-size: 12px; }
.formula-buttons { width: 94px; justify-content: space-around; margin-right: 3px; }
.fx { font: italic 700 13px/16px "Liberation Serif", serif; color: #555; }
.formula { flex: 1; padding: 0 3px 0 10px; }
.formula input { flex: 1; }

/* worksheet */
.workspace { flex: 1; min-height: 0; display: flex; }
.book { flex: 1; min-width: 0; display: flex; flex-direction: column; border-right: 1px solid #c6c6c6; }
.sheet-row { flex: 1; min-height: 0; display: flex; }
.sheet { position: relative; flex: 1; min-width: 0; overflow: hidden; background: #fff; border-right: 1px solid #c6c6c6; }
.cells { table-layout: fixed; width: 100%; min-width: 892px; border-collapse: separate; border-spacing: 0; font-size: 12px; line-height: 18px; color: #111; font-feature-settings: normal; }
.c-head { width: 27px; }
.c-a { width: 154px; }
.c-b { width: 73px; }
.c-c { width: 53px; }
.c-d { width: 54px; }
.c-e { width: 60px; }
.c-std { width: 59px; }
.cells th { padding: 0; font-weight: 400; background: #e6e6e6; color: #444; border-right: 1px solid #c6c6c6; border-bottom: 1px solid #c6c6c6; }
.cells thead th { height: 21px; border-bottom-color: #a9a9a9; }
.cells .corner { text-align: right; line-height: 0; padding: 3px 2px 0 0; }
.cells .col-on { background: #d2d2d2; color: #217346; border-bottom: 2px solid #217346; }
.cells .row-on { background: #d2d2d2; color: #217346; border-right: 2px solid #217346; }
.cells tbody tr { height: 21px; }
.cells tbody tr:nth-child(3n) { height: 20px; }
.cells td { padding: 0 3px 1px; border-right: 1px solid #e0e0e0; border-bottom: 1px solid #e0e0e0; white-space: nowrap; line-height: 16px; }
.cells td:nth-child(-n+6) { font-weight: 700; }
.band td:nth-child(-n+6) { background: #ddebf7; border-color: #ddebf7; }
.item td:nth-child(-n+6) { border-right-color: #fff; border-bottom-color: #b9d3ea; }
.cells .num { text-align: right; padding-right: 5px; }
.cells .selected { position: relative; outline: 2px solid #217346; outline-offset: -1px; }
.selected::after { content: ""; position: absolute; right: -2px; bottom: -2px; width: 5px; height: 5px; background: #217346; border: solid #fff; border-width: 1px 0 0 1px; }
.with-filter { display: flex; align-items: center; gap: 6px; height: 16px; }
.edge .with-filter { justify-content: space-between; }
.cells .edge { padding-right: 0; }
.filter { flex: none; display: flex; align-items: center; justify-content: center; width: 14px; height: 14px; background: #f8f8f8; border: 1px solid #c3c3c3; color: #444; margin-top: 3px; }
.plus { width: 10px; height: 10px; margin: 0 1px 0 3px; border: 1px solid #b3bcc6; background: linear-gradient(#99a, #99a) center / 6px 1px no-repeat, linear-gradient(#99a, #99a) center / 1px 6px no-repeat, #e9eef3; }

/* chart */
.chart { position: absolute; left: 438px; top: 29px; width: 406px; display: flex; flex-direction: column; gap: 2px; padding: 6px 9px; background: #fff; border: 1px solid #cfcfcf; }
.chart-row { display: flex; gap: 1px; }
.chart-main { gap: 0; }
.field { display: flex; align-items: center; gap: 4px; height: 16px; padding: 0 3px; background: linear-gradient(#dedede, #c4c4c4); color: #222; font-feature-settings: normal; font-size: 9px; }
.field .caret { color: #333; }
.big-funnel { width: 15px; height: 14px; margin-left: -4px; color: #757575; }
.sign { width: 14px; justify-content: center; padding: 0; }
.axis { font-size: 9px; fill: #555; font-feature-settings: normal; }
.legend { padding-top: 63px; }
.legend li { display: flex; align-items: center; gap: 3px; height: 19px; padding-left: 4px; font-size: 9px; }
.key { width: 6px; height: 6px; }
.key-won { background: #a5a5a5; }
.key-b { background: #ed7d31; }
.key-a { background: #5b9bd5; }

/* scroll bars and sheet tabs */
.vscroll { width: 18px; display: flex; flex-direction: column; padding: 0 3px 0 1px; background: #dcdcdc; }
.vscroll button { height: 14px; background: #fff; border: 1px solid #cfcfcf; line-height: 0; }
.vscroll button .caret { width: 6px; height: 4px; }
.v-thumb { flex: 17; background: #fff; border: 1px solid #c0c0c0; }
.v-track { flex: 3; }
.sheet-bar { flex: none; display: flex; align-items: center; height: 20px; border-top: 1px solid #c6c6c6; border-bottom: 1px solid #cfcfcf; padding-right: 18px; }
.tab-nav { width: 62px; display: flex; justify-content: center; gap: 13px; }
.sheet-tab { width: 57px; height: 17px; align-self: flex-start; background: #fff; color: #217346; border-bottom: 2px solid #217346; font-size: 12px; line-height: 14px; }
.add-sheet { margin: 0 auto 0 19px; line-height: 0; }
.sheet-bar .dots { width: 22px; }
.hscroll { width: 38%; display: flex; height: 15px; background: #dcdcdc; }
.hscroll button { width: 14px; background: #fff; line-height: 0; }
.h-thumb { flex: 1; background: #fff; border: 1px solid #b8b8b8; }
.h-track { width: 20px; }

/* field pane */
.pane { flex: none; width: 220px; display: flex; flex-direction: column; padding: 6px 8px 7px; border-left: 1px solid #d6d6d6; }
.pane-title { display: flex; align-items: center; height: 25px; color: #555; }
.pane-title h1 { flex: 1; min-width: 0; font-size: 16px; line-height: 25px; color: #217346; white-space: nowrap; }
.pane-title .caret { width: 7px; height: 4px; margin-right: 8px; }
.pane-title button { line-height: 0; }
.pane-cols { flex: 1; display: grid; grid-template-columns: 99px 97px; column-gap: 8px; }
.fields-col { display: flex; flex-direction: column; padding: 3px 0 6px; }
.intro { display: flex; justify-content: space-between; align-items: center; }
.intro p { width: 56px; }
.gear { display: flex; align-items: center; justify-content: center; gap: 7px; width: 33px; height: 20px; background: #fff; border: 1px solid #c6c6c6; }
.search { display: flex; align-items: center; margin-top: 9px; height: 18px; padding: 0 2px; background: #fff; border: 1px solid #c6c6c6; }
.search input { flex: 1; }
.search input::placeholder { color: #777; opacity: 1; }
.field-list { flex: 1; margin-top: 11px; padding: 0 3px 0 1px; background: #fff; }
.field-list li { height: 17px; }
.field-list li:nth-child(3n) { height: 16px; }
.field-list label, .defer label { display: flex; align-items: center; gap: 4px; height: 16px; white-space: nowrap; }
.field-list span { font-feature-settings: normal; }
.field-list input:checked + span { font-weight: 700; color: #222; }
.field-list a { display: block; margin-top: 5px; color: inherit; text-decoration: none; }
.flag { width: 10px; height: 10px; margin-left: auto; color: #8a8a8a; }
input[type="checkbox"] { appearance: none; flex: none; width: 11px; height: 11px; margin: 0; background: #fff; border: 1px solid #b4b4b4; }
input[type="checkbox"]:checked::before { content: ""; display: block; width: 4px; height: 7px; margin: 0 0 0 3px; border: solid #555; border-width: 0 1px 1px 0; transform: rotate(40deg); }
.areas-col { display: flex; flex-direction: column; }
.areas-col p { height: 51px; }
.area { padding-bottom: 3px; margin-bottom: 4px; border-bottom: 1px solid #c6c6c6; }
.area-last { border-bottom: 0; }
.area h3 { display: flex; align-items: center; gap: 5px; height: 21px; padding-left: 3px; font-size: 10px; color: #555; }
.area h3 svg { color: #8a8a8a; }
.sigma { width: 10px; font-size: 12px; }
.drop { height: 41px; background: #fff; }
.pill { display: flex; justify-content: space-between; align-items: center; width: 100%; height: 20px; padding: 0 10px 0 7px; background: #fff; border: 1px solid #d6d6d6; font-feature-settings: normal; }
.pill .caret { width: 7px; height: 4px; color: #111; }
.drop-split { display: flex; gap: 1px; }
.pills { flex: 1; display: grid; row-gap: 1px; }
.mini-scroll { width: 14px; display: flex; flex-direction: column; }
.mini-scroll button, .mini-scroll i { flex: 1; border: 1px solid #cfcfcf; line-height: 0; }
.defer { display: flex; justify-content: space-between; align-items: center; margin-top: auto; height: 20px; }
.update { width: 30px; height: 20px; background: #f6f6f6; color: #aaa; }

/* status bar */
.status { flex: none; display: flex; align-items: center; height: 18px; padding: 0 4px; background: #f1f1f1; border-top: 1px solid #d2d2d2; }
.view { width: 26px; height: 18px; line-height: 0; }
.view-on { background: #c6c6c6; }
.zoom-sign { width: 12px; text-align: center; font-size: 14px; font-weight: 700; }
.zoom { appearance: none; width: 86px; height: 12px; margin: 0 3px; background: linear-gradient(#aaa, #aaa) center / 100% 1px no-repeat; }
.zoom::-webkit-slider-thumb { appearance: none; width: 4px; height: 10px; background: #555; }
.zoom-value { width: 35px; text-align: right; font-size: 11px; }
```
